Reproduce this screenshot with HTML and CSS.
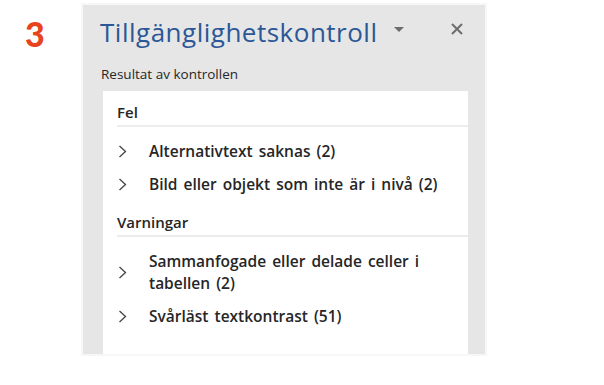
FILE: index.html
```html
<!DOCTYPE html>
<html lang="sv">
<head>
  <meta charset="UTF-8">
  <title>Tillgänglighetskontroll</title>
  <link rel="stylesheet" href="styles.css">
</head>
<body>
  <div class="page">
    <div class="step-number">3</div>
    <div class="pane-frame">
      <div class="pane">
        <div class="pane-header">
          <h1 class="pane-title">Tillgänglighetskontroll</h1>
          <span class="pane-menu"></span>
          <button class="pane-close" aria-label="Stäng">
            <svg width="12" height="12" viewBox="0 0 12 12"><path d="M1 1 L11 11 M11 1 L1 11" stroke="#6d6d6d" stroke-width="2" fill="none"/></svg>
          </button>
        </div>
        <div class="pane-subtitle">Resultat av kontrollen</div>
        <div class="results">
          <div class="group-title">Fel</div>
          <div class="result-item">
            <svg class="chevron" width="9" height="13" viewBox="0 0 9 13"><path d="M1.5 1 L7.5 6.5 L1.5 12" stroke="#444" stroke-width="1.3" fill="none"/></svg>
            <span class="item-text">Alternativtext saknas (2)</span>
          </div>
          <div class="result-item">
            <svg class="chevron" width="9" height="13" viewBox="0 0 9 13"><path d="M1.5 1 L7.5 6.5 L1.5 12" stroke="#444" stroke-width="1.3" fill="none"/></svg>
            <span class="item-text">Bild eller objekt som inte är i nivå (2)</span>
          </div>
          <div class="group-title">Varningar</div>
          <div class="result-item">
            <svg class="chevron" width="9" height="13" viewBox="0 0 9 13"><path d="M1.5 1 L7.5 6.5 L1.5 12" stroke="#444" stroke-width="1.3" fill="none"/></svg>
            <span class="item-text">Sammanfogade eller delade celler i tabellen (2)</span>
          </div>
          <div class="result-item">
            <svg class="chevron" width="9" height="13" viewBox="0 0 9 13"><path d="M1.5 1 L7.5 6.5 L1.5 12" stroke="#444" stroke-width="1.3" fill="none"/></svg>
            <span class="item-text">Svårläst textkontrast (51)</span>
          </div>
        </div>
      </div>
    </div>
  </div>
</body>
</html>
```

FILE: styles.css
```css
* {
  box-sizing: border-box;
  margin: 0;
  padding: 0;
}

body {
  background: white;
  font-family: 'Open Sans', 'Noto Sans', sans-serif;
  color: #262626;
}

.page {
  display: flex;
  align-items: flex-start;
  width: 604px;
  height: 385px;
}

.step-number {
  width: 81px;
  padding: 14px 0 0 25px;
  font-family: 'Lato', sans-serif;
  font-weight: 900;
  font-size: 34px;
  line-height: 40px;
  color: #e8431d;
}

.pane-frame {
  margin-top: 3px;
  padding: 2px;
  background: #f7f7f7;
  width: 406px;
  height: 353px;
}

.pane {
  background: #e6e6e6;
  height: 100%;
  padding: 0 17px 0 20px;
  display: flex;
  flex-direction: column;
}

.pane-header {
  display: flex;
  align-items: center;
  height: 52px;
  padding-top: 2px;
  margin-left: -3px;
}

.pane-title {
  font-family: 'Open Sans', sans-serif;
  font-weight: 400;
  font-size: 26px;
  line-height: 36px;
  letter-spacing: 0.5px;
  color: #2b5797;
}

.pane-menu {
  margin-left: 16px;
  margin-top: -6px;
  width: 0;
  height: 0;
  border-left: 5px solid transparent;
  border-right: 5px solid transparent;
  border-top: 5px solid #6d6d6d;
}

.pane-close {
  margin-left: auto;
  margin-right: 5px;
  margin-top: -6px;
  background: none;
  border: none;
  display: flex;
}

.pane-subtitle {
  font-size: 13.5px;
  color: #262626;
  height: 34px;
  padding-top: 8px;
  margin-left: -2px;
}

.results {
  flex: 1;
  background: white;
  padding: 0 0 0 14px;
}

.group-title {
  font-weight: 600;
  font-size: 15px;
  line-height: 20px;
  padding: 11px 0 3px 0;
  border-bottom: 2px solid #ececec;
  margin-bottom: 8px;
}

.result-item {
  display: flex;
  align-items: center;
  padding: 5px 20px 6px 0;
  font-weight: 600;
  font-size: 15.5px;
  line-height: 22px;
  word-spacing: 2px;
}

.chevron {
  flex-shrink: 0;
  margin: 0 22px 0 1px;
}
```
